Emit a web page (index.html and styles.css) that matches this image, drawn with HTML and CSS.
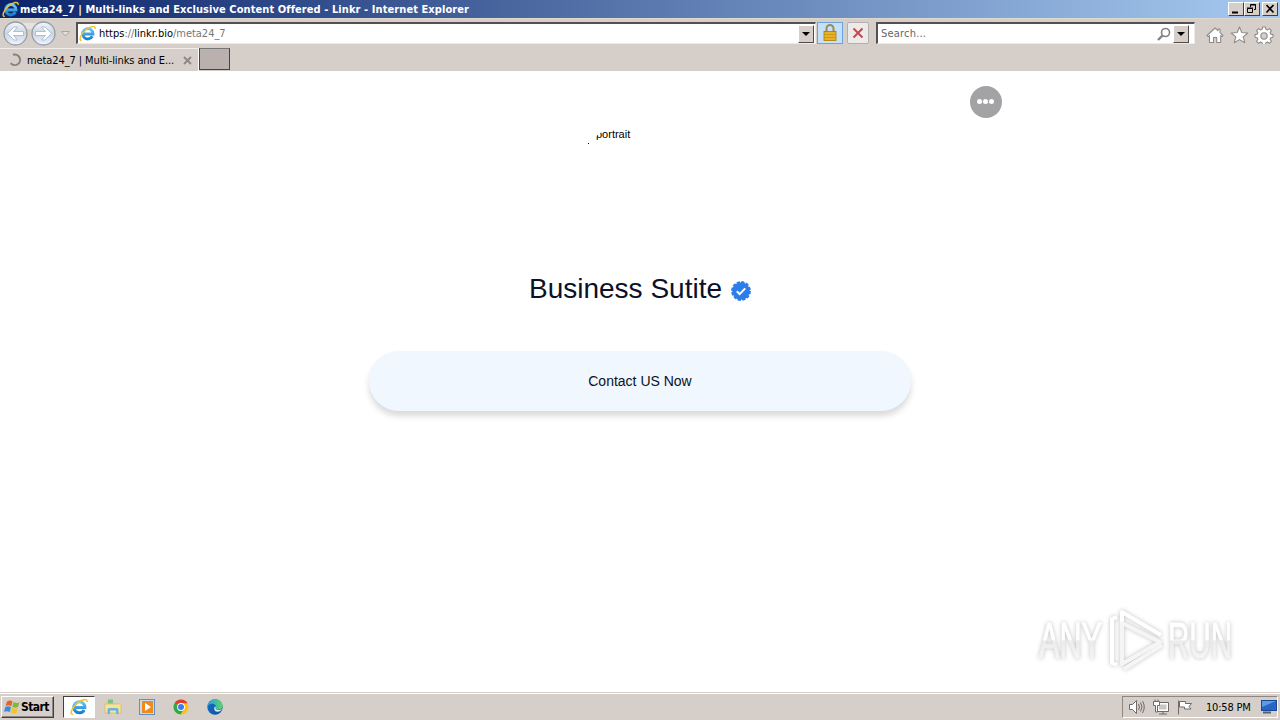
FILE: index.html
```html
<!DOCTYPE html>
<html lang="en">
<head>
    <meta charset="UTF-8">
    <meta name="viewport" content="width=device-width, initial-scale=1.0">
    <title>meta24_7 | Multi-links and Exclusive Content Offered - Linkr</title>
    <link rel="stylesheet" href="styles.css">
</head>
<body>
    <!-- shared icons -->
    <svg class="defs" width="0" height="0">
        <defs>
            <linearGradient id="ieBlue" x1="0" y1="0" x2="0" y2="1">
                <stop offset="0" stop-color="#6cc8f4"/>
                <stop offset="1" stop-color="#1a7fd0"/>
            </linearGradient>
            <linearGradient id="navFill" x1="0" y1="0" x2="0" y2="1">
                <stop offset="0" stop-color="#f4f7fb"/>
                <stop offset="0.5" stop-color="#c9d4e2"/>
                <stop offset="1" stop-color="#eef6ff"/>
            </linearGradient>
            <linearGradient id="edgeFill" x1="0" y1="0" x2="1" y2="1">
                <stop offset="0" stop-color="#1673c8"/>
                <stop offset="1" stop-color="#0c4fa0"/>
            </linearGradient>
            <linearGradient id="edgeTop" x1="0" y1="0" x2="1" y2="0">
                <stop offset="0" stop-color="#2a9fe0"/>
                <stop offset="1" stop-color="#5fd36a"/>
            </linearGradient>
        </defs>
        <symbol id="ie" viewBox="0 0 16 16">
            <path d="M12.6 10.6A4.9 4.9 0 1 1 13.2 8.5H4" fill="none" stroke="url(#ieBlue)" stroke-width="2.7"/>
            <path d="M2.6 14.6C-.6 14.6 1.5 8.600 6.300 4.700 10.300 1.200 15.700-.2 15.200 3.700" fill="none" stroke="#f2c230" stroke-width="1.4"/>
        </symbol>
    </svg>

    <header class="titlebar">
        <svg class="title-icon" width="17" height="17"><use href="#ie"/></svg>
        <span class="title-text">meta24_7 | Multi-links and Exclusive Content Offered - Linkr - Internet Explorer</span>
        <div class="window-buttons">
            <span class="win-btn"><svg width="14" height="12"><path d="M3 9.500h6" stroke="#000" stroke-width="2"/></svg></span>
            <span class="win-btn"><svg width="14" height="12" fill="none" stroke="#000"><path d="M5.500 4V1.500h5v5H9M5 2h6M2.500 5.500h5v4h-5zM2 5h6"/></svg></span>
            <span class="win-btn close"><svg width="14" height="12"><path d="M3.500 2l7 7.500M10.500 2l-7 7.500" stroke="#000" stroke-width="1.700"/></svg></span>
        </div>
    </header>

    <div class="toolbar">
        <svg class="nav" width="72" height="30">
            <path d="M15 4h28v6H15z" fill="#e6e2df"/>
            <circle cx="15.500" cy="14.500" r="11.500" fill="url(#navFill)" stroke="#959ca6" stroke-width="1.300"/>
            <circle cx="43.500" cy="14.500" r="11.500" fill="url(#navFill)" stroke="#959ca6" stroke-width="1.300"/>
            <path d="M7.500 14.500l6.500-6.500h3.500l-4 4.500h10v4h-10l4 4.500H14z" fill="#fff" stroke="#a4b2c4" stroke-width=".8"/>
            <path d="M51.500 14.500L45 8h-3.500l4 4.500h-10v4h10l-4 4.500H45z" fill="#fff" stroke="#a4b2c4" stroke-width=".8"/>
            <path d="M61.500 12.500h8l-4 4.500z" fill="#e4e0dc" stroke="#aaa6a2"/>
        </svg>
        <div class="field address">
            <svg width="17" height="17"><use href="#ie"/></svg>
            <span class="url">https<i>://</i>linkr.bio<i>/meta24_7</i></span>
            <span class="drop"></span>
        </div>
        <span class="tool-btn lock">
            <svg width="16" height="18">
                <path d="M4.500 8V4.500a3.500 3.500 0 0 1 7 0V8" fill="none" stroke="#a08a50" stroke-width="2"/>
                <rect x="2" y="7.500" width="12" height="9" fill="#e6b422" stroke="#a87808" stroke-width=".8"/>
                <path d="M2 10.500h12M2 13.500h12" stroke="#c89a18"/>
            </svg>
        </span>
        <span class="tool-btn stop">
            <svg width="12" height="12"><path d="M1.500 1.500l9 9M10.500 1.500l-9 9" stroke="#c24b50" stroke-width="2"/></svg>
        </span>
        <div class="field search">
            <span class="placeholder">Search...</span>
            <svg width="14" height="14" fill="none" stroke="#85817f"><circle cx="8.500" cy="5.500" r="4" stroke-width="1.600"/><path d="M5.500 8.500l-4.500 4.500" stroke-width="2.400"/></svg>
            <span class="drop"></span>
        </div>
        <svg class="commands" width="68" height="18" fill="#fff" stroke="#8f8b8a" stroke-width="1.100" stroke-linejoin="round">
            <path d="M1 9.500L9 2l3 2.700V3h2v3.600l3 2.900-1 1.100-1.300-1V16.500h-4v-5H7.500v5h-4V9.600l-1.300 1z"/>
            <path d="M33.500 1l2.300 5.500 6 .5-4.600 3.900 1.500 5.800-5.200-3.100-5.200 3.100 1.500-5.800L25.200 7l6-.5z"/>
            <path d="M56.600 1h2.800l.5 2.300 1.500.6 2-1.200 2 2-1.300 1.900.7 1.500 2.200.5v2.700l-2.200.5-.7 1.500 1.300 2-2 2-2-1.300-1.500.7-.5 2.200h-2.800l-.5-2.200-1.500-.7-2 1.300-2-2 1.300-2-.7-1.500-2.200-.5V8.600l2.200-.5.7-1.500-1.300-1.900 2-2 2 1.200 1.500-.6z"/>
            <circle cx="58" cy="9.900" r="3.200" fill="#d6cfc9"/>
        </svg>
    </div>

    <div class="tabs">
        <div class="tab">
            <svg width="14" height="14"><path d="M5 1.800A5.300 5.300 0 1 1 2.700 10.200" fill="none" stroke="#85817f" stroke-width="2"/></svg>
            <span class="tab-text">meta24_7 | Multi-links and E...</span>
            <svg class="tab-close" width="9" height="9"><path d="M1 1l7 7M8 1l-7 7" stroke="#8b8785" stroke-width="1.800"/></svg>
        </div>
        <div class="new-tab"></div>
    </div>

    <main class="page">
        <span class="more"><i></i><i></i><i></i></span>
        <div class="portrait"><div class="portrait-clip">portrait</div></div>
        <h1 class="name">
            Business Sutite
            <svg width="20" height="20" viewBox="0 0 20 20">
                <circle cx="10" cy="10" r="8.800" fill="#2b7de9"/>
                <circle cx="10" cy="10" r="9" fill="none" stroke="#2b7de9" stroke-width="1.800" stroke-dasharray="3.300 1.412"/>
                <path d="M5.800 10.200l2.900 2.900 5.500-5.700" fill="none" stroke="#fff" stroke-width="2"/>
            </svg>
        </h1>
        <a class="link">Contact US Now</a>

        <svg class="watermark" width="240" height="80">
            <defs>
                <linearGradient id="markFill" gradientUnits="userSpaceOnUse" x1="0" y1="20" x2="0" y2="60">
                    <stop offset=".5" stop-color="#fff"/>
                    <stop offset=".52" stop-color="#ececec"/>
                    <stop offset="1" stop-color="#f6f6f6"/>
                </linearGradient>
            </defs>
            <g fill="url(#markFill)" stroke="url(#markFill)">
                <text x="19" y="58" textLength="63" lengthAdjust="spacingAndGlyphs">ANY</text>
                <text x="148" y="58" textLength="64" lengthAdjust="spacingAndGlyphs">RUN</text>
            </g>
            <g fill="none" stroke="#fff" stroke-width="4" stroke-linejoin="round">
                <path d="M97 17l-5 2v44l5 2"/>
                <path d="M102 55V12l39 23"/>
                <path d="M102 23l38 19-38 22z" stroke="#f5f5f5"/>
                <path d="M142 45l-38 24" stroke="#f5f5f5"/>
            </g>
        </svg>
    </main>

    <footer class="taskbar">
        <div class="start">
            <svg width="17" height="16">
                <path d="M3 2.500q3-2 5.500 0L7.300 7.300Q4.500 5.500 1.500 7z" fill="#e8602c"/>
                <path d="M9.500 3q3 1.800 6 .3L14 8q-3 1.500-5.700-.3z" fill="#7dba3c"/>
                <path d="M1.300 8q3-1.600 5.700.2L5.800 13Q3 11.500 0 12.700z" fill="#3c8ad8"/>
                <path d="M8 8.800q3 1.700 5.700.2L12.500 14q-3 1.300-5.700-.5z" fill="#f4c22c"/>
            </svg>
            <b>Start</b>
        </div>
        <div class="task active"><svg width="18" height="18"><use href="#ie"/></svg></div>
        <div class="task">
            <svg width="18" height="18">
                <path d="M2 3h6l1 2h6v8H2z" fill="#e9cf72"/>
                <path d="M4 1.500h5v4H4z" fill="#7fc08a"/>
                <path d="M1 6h16v9H1z" fill="#f4e3a0" stroke="#d7b75a" stroke-width=".7"/>
                <path d="M3.500 16v-4.500q0-1.500 1.500-1.500h8q1.500 0 1.500 1.500V16h-2.500v-3.500h-6V16z" fill="#68b4df"/>
            </svg>
        </div>
        <div class="task">
            <svg width="18" height="18">
                <rect x="1.500" y="1.500" width="15" height="15" fill="#c4dcf0" stroke="#5b93c9"/>
                <rect x="4" y="3" width="11" height="12" fill="#f08a1c"/>
                <path d="M7 5l6 4-6 4z" fill="#fff"/>
            </svg>
        </div>
        <div class="task">
            <svg width="18" height="18">
                <circle cx="9" cy="9" r="7.500" fill="#fbc116"/>
                <path d="M9 9L2.500 5.250A7.500 7.500 0 0 1 15.500 5.250L9 5.300z" fill="#e33b2e"/>
                <path d="M9 9L2.500 5.250A7.500 7.500 0 0 0 8.500 16.500L12 11z" fill="#2da94f"/>
                <circle cx="9" cy="9" r="3.900" fill="#fff"/>
                <circle cx="9" cy="9" r="3" fill="#3f7de8"/>
            </svg>
        </div>
        <div class="task">
            <svg width="18" height="18">
                <circle cx="9" cy="9" r="7.700" fill="url(#edgeFill)"/>
                <path d="M1.400 8.500C2 4 5.500 1.300 9 1.300c4.500 0 7.700 3 7.700 6.700 0 2.500-2 3.800-4.500 3.800-2 0-3-.8-2.500-1.700C11 7.500 8.500 5.800 6 5.800c-2 0-3.800 1-4.600 2.700z" fill="url(#edgeTop)"/>
                <path d="M9.700 10.100c-.5 1 .5 1.900 2.500 1.900 1.700 0 3-.4 3.900-1.200-.8 1.700-2.500 3-4.600 3-3.200 0-4.200-3.300-2.300-5.500.6.600.8 1.200.5 1.800z" fill="#d8e8f4"/>
            </svg>
        </div>
        <div class="tray">
            <svg width="66" height="18" fill="#fff" stroke="#6d6a69">
                <path d="M1.500 6.500h3l4-4v13l-4-4h-3z"/>
                <path d="M10.500 6q2 3 0 6M12.500 4.500q3 4.500 0 9M14.500 3q3.500 6 0 12" fill="none"/>
                <path d="M28.500 4.500h12v9h-12zM31 16h8M35 14v2"/>
                <path d="M31 6.500h7.500v5H31z" fill="#c9c5c2" stroke="none"/>
                <path d="M25.500 3.500h6v4h-2v6.500h-2V7.500h-2zM27 1.500v2M30 1.500v2"/>
                <path d="M50.500 2.500v14M51.500 3.500h6v2h6l-2.500 3 2 2.500h-6.500v-2h-5z"/>
            </svg>
            <span class="clock">10:58 PM</span>
            <svg width="16" height="14">
                <rect x=".5" y=".5" width="15" height="10" fill="#2766c4" stroke="#174a94"/>
                <path d="M1 1h14L1 7z" fill="#5c9be8"/>
                <path d="M2 12.500h8" stroke="#555f70" stroke-width="2"/>
            </svg>
        </div>
    </footer>
</body>
</html>
```

FILE: styles.css
```css
* {
    box-sizing: border-box;
}

body {
    margin: 0;
    width: 1280px;
    height: 720px;
    overflow: hidden;
    display: flex;
    flex-direction: column;
    background-color: #fff;
    color: #000;
    font-family: "DejaVu Sans Condensed", "DejaVu Sans", sans-serif;
    font-size: 11px;
}

svg {
    display: block;
    flex: none;
}

.defs {
    position: absolute;
}

span {
    white-space: nowrap;
}

/* Title bar */
.titlebar {
    height: 18px;
    flex: none;
    display: flex;
    align-items: center;
    padding: 0 2px;
    background: linear-gradient(to right, #0c246a, #a6caf0);
    color: #fff;
}

.title-text {
    margin-left: 1px;
    flex: 1;
    font-weight: bold;
    letter-spacing: 0.08px;
}

.window-buttons {
    display: flex;
    margin-bottom: 1px;
}

.win-btn {
    width: 16px;
    height: 14px;
    background-color: #d6cfc9;
    border: 1px solid;
    border-color: #fff #404040 #404040 #fff;
}

.win-btn.close {
    margin-left: 2px;
}

/* Address row */
.toolbar {
    height: 30px;
    flex: none;
    display: flex;
    align-items: center;
    background-color: #d6cfc9;
    border-top: 1px solid #dedad0;
}

.nav {
    margin-right: 4px;
}

.field {
    height: 22px;
    display: flex;
    align-items: center;
    margin-bottom: 1px;
    background-color: #fff;
    border: 2px solid;
    border-width: 2px 1px 1px 2px;
    border-color: #555050 #eeeae6 #eeeae6 #555050;
}

.address {
    width: 740px;
    padding: 0 1px;
}

.url {
    margin-left: 3px;
    flex: 1;
    letter-spacing: -0.02px;
}

.url i {
    font-style: normal;
    color: #777;
}

.drop {
    width: 16px;
    height: 18px;
    display: flex;
    align-items: center;
    justify-content: center;
    background-color: #d6cfc9;
    border: 1px solid;
    border-color: #fff #504c4a #504c4a #fff;
}

.drop::before {
    content: "";
    border: 4px solid transparent;
    border-top-color: #000;
    border-bottom: 0;
}

.tool-btn {
    height: 22px;
    display: flex;
    align-items: center;
    justify-content: center;
    margin-bottom: 1px;
}

.lock {
    width: 26px;
    margin-left: 1px;
    background-color: #c6dffa;
    border: 1px solid #6ba3dc;
}

.stop {
    width: 22px;
    margin-right: 7px;
    margin-left: 4px;
    background-color: #edeaea;
    border: 1px solid #b5b0b0;
    border-radius: 2px;
}

.search {
    width: 319px;
    padding: 0 5px 0 3px;
}

.placeholder {
    flex: 1;
    color: #666;
    letter-spacing: 0.2px;
}

.search .drop {
    margin-left: 2px;
}

.commands {
    margin: 2px 0 0 11px;
}

/* Tabs */
.tabs {
    height: 23px;
    flex: none;
    display: flex;
    background-color: #d6cfc9;
}

.tab {
    width: 199px;
    display: flex;
    align-items: center;
    padding: 0 6px 0 8px;
    border-top: 1px solid #efece9;
    border-right: 1px solid #fff;
}

.tab-text {
    margin-left: 5px;
    flex: 1;
    letter-spacing: -0.1px;
}

.new-tab {
    width: 31px;
    height: 22px;
    background-color: #bab1ae;
    border: 1px solid;
    border-color: #777 #474342 #474342 #474342;
}

/* Page */
.page {
    flex: 1;
    position: relative;
    display: flex;
    flex-direction: column;
    align-items: center;
    font-family: "Liberation Sans", Arial, sans-serif;
    color: #0a1128;
}

.more {
    position: absolute;
    top: 15px;
    left: 970px;
    width: 32px;
    height: 32px;
    padding: 0 1px 1px 0;
    border-radius: 50%;
    background-color: #a3a3a6;
    display: flex;
    align-items: center;
    justify-content: center;
    gap: 1px;
}

.more i {
    width: 5px;
    height: 5px;
    border-radius: 50%;
    background-color: #fff;
}

.portrait {
    position: relative;
    width: 104px;
    height: 104px;
    margin-top: 55px;
}

.portrait::before {
    content: "";
    position: absolute;
    top: 17px;
    left: 0;
    width: 1px;
    height: 1px;
    background-color: #000;
}

/* rounded clip cuts into the alt text */
.portrait-clip {
    height: 104px;
    padding-left: 8px;
    border-radius: 32px;
    overflow: hidden;
    color: #000;
    font-size: 11px;
    line-height: 16px;
}

.name {
    margin: 42px 0 0;
    height: 34px;
    display: flex;
    align-items: center;
    gap: 9px;
    font-size: 28px;
    font-weight: normal;
    line-height: 34px;
}

.name svg {
    margin-top: 3px;
}

.link {
    width: 542px;
    height: 60px;
    margin-top: 45px;
    border-radius: 30px;
    background-color: #f1f7fe;
    box-shadow: 0 5px 6px rgba(0, 0, 0, 0.15);
    font-size: 14px;
    line-height: 60px;
    text-align: center;
}

.watermark {
    position: absolute;
    right: 20px;
    bottom: 12px;
    filter: drop-shadow(0 0 2px rgba(0, 0, 0, 0.25));
}

.watermark text {
    font-family: "Liberation Sans", Arial, sans-serif;
    font-size: 50px;
}

/* Taskbar */
.taskbar {
    height: 28px;
    flex: none;
    display: flex;
    align-items: center;
    padding: 1px 2px 0 1px;
    background-color: #d6cfc9;
    border-top: 1px solid #d6cfc9;
    box-shadow: inset 0 1px #fff;
}

.start {
    width: 53px;
    height: 22px;
    margin-right: 9px;
    display: flex;
    align-items: center;
    padding-left: 2px;
    border: 1px solid;
    border-color: #fff #404040 #404040 #fff;
    box-shadow: inset -1px -1px #8c8783;
}

.start b {
    font-size: 12px;
    letter-spacing: -0.6px;
}

.task {
    width: 32px;
    height: 22px;
    margin-right: 2px;
    display: flex;
    align-items: center;
    justify-content: center;
}

.task.active {
    background-color: #fff;
    border: 1px solid;
    border-color: #404040 #fff #fff #404040;
}

.tray {
    width: 156px;
    height: 22px;
    margin-left: auto;
    padding-left: 5px;
    display: flex;
    align-items: center;
    border: 1px solid;
    border-color: #8c8783 #fff #fff #8c8783;
}

.clock {
    flex: 1;
    margin-left: 12px;
    letter-spacing: -0.2px;
}
```
